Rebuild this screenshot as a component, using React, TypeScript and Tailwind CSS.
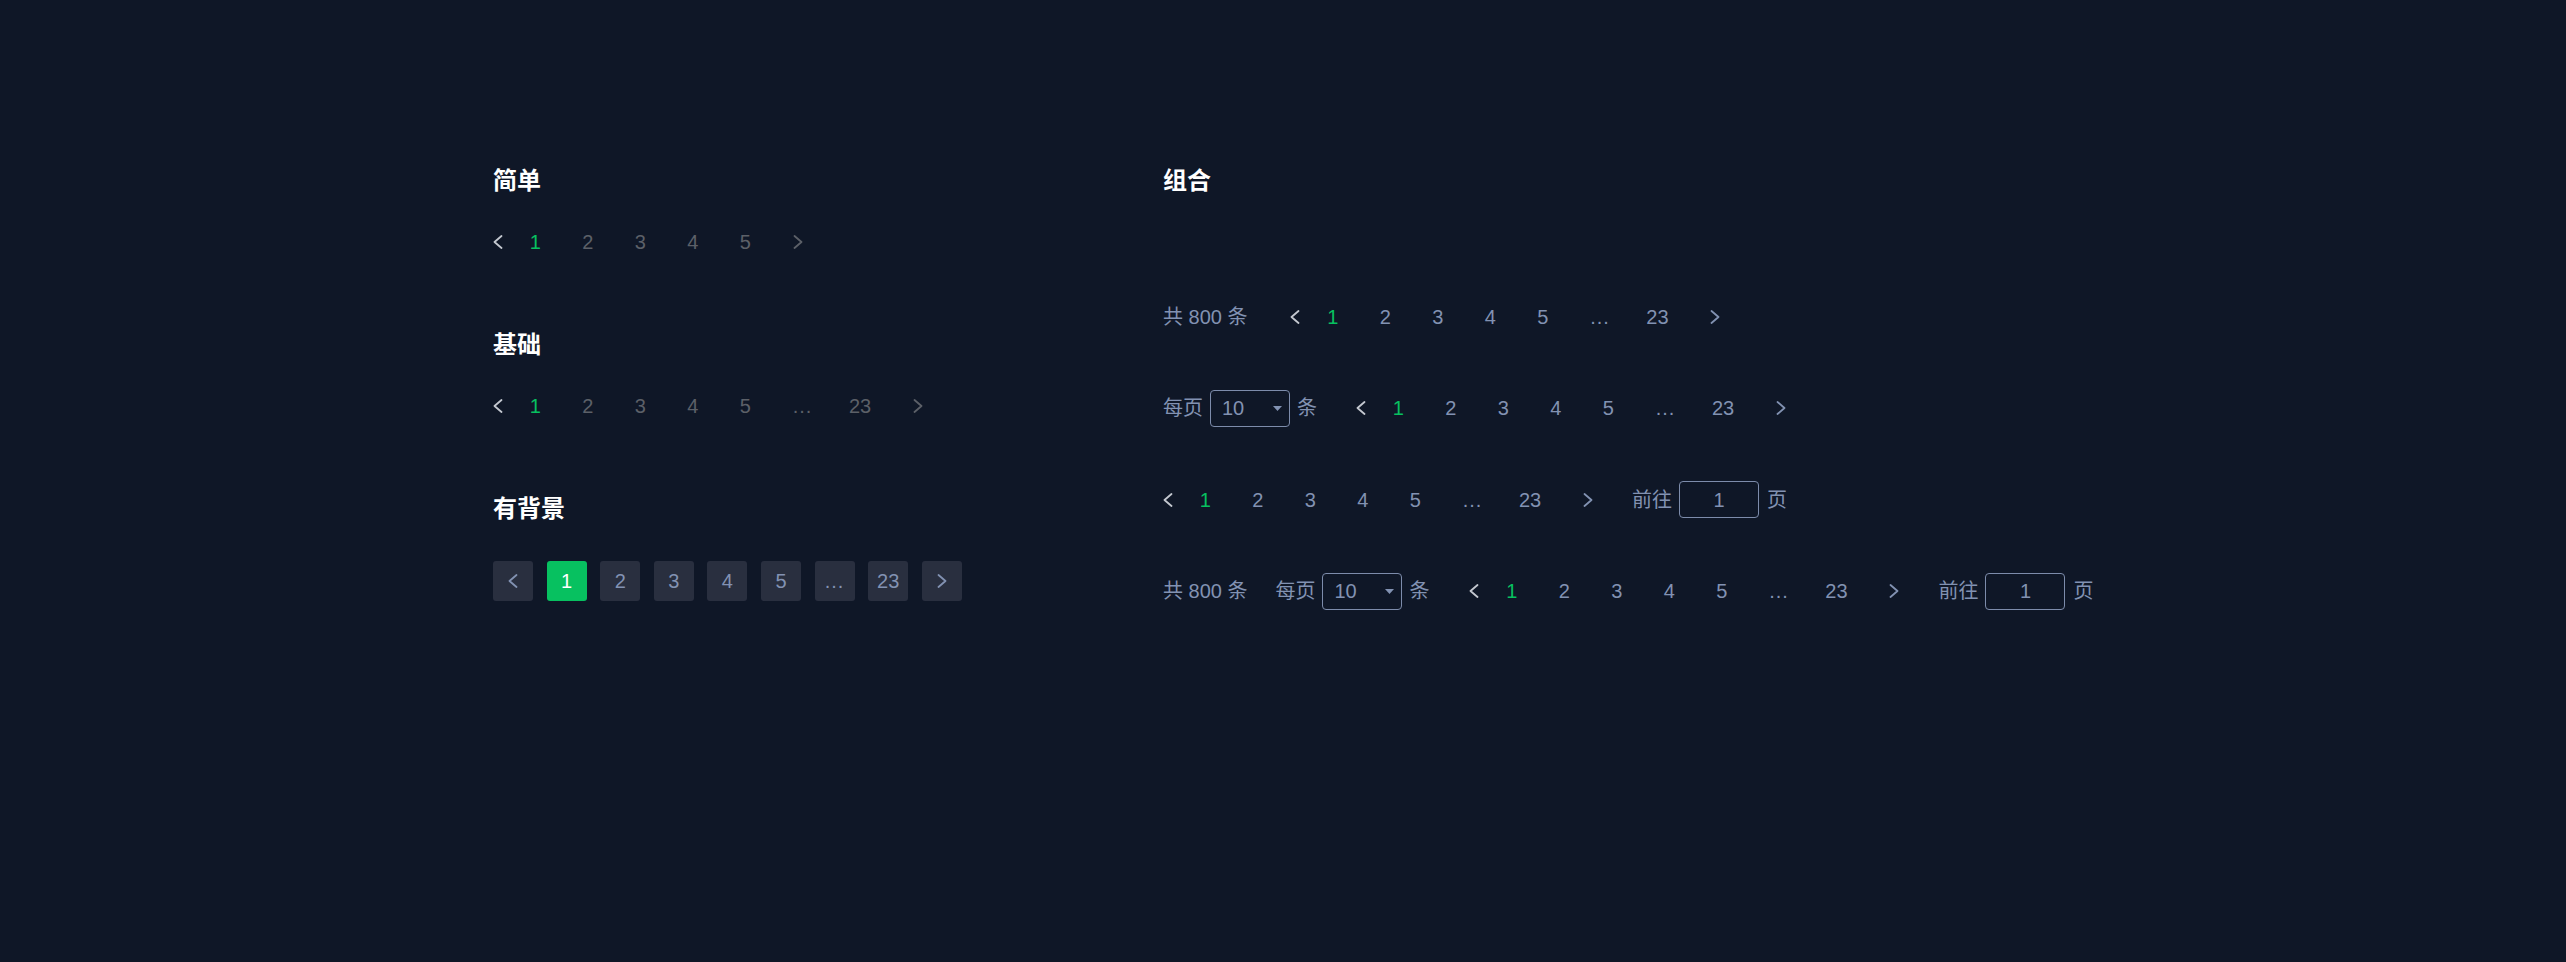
import type { ReactNode } from 'react';

const GREEN = 'text-[#07c160]';

function Chevron({ dir }: { dir: 'left' | 'right' }) {
  return (
    <svg
      width="10"
      height="14"
      viewBox="0 0 10 14"
      fill="none"
      stroke="currentColor"
      strokeWidth="1.8"
      strokeLinecap="round"
      strokeLinejoin="round"
    >
      <polyline points={dir === 'left' ? '8.5,1 1.5,7 8.5,13' : '1.5,1 8.5,7 1.5,13'} />
    </svg>
  );
}

const itemWidth: Record<string, string> = {
  '...': 'w-[62px] tracking-[1px]',
  '23': 'w-[53px]',
};

function PlainPager({ pages, tone, className = '' }: { pages: string[]; tone: 'gray' | 'blue'; className?: string }) {
  const txt = tone === 'gray' ? 'text-[#5c6068]' : 'text-[#8292b2]';
  const long = pages.length > 5;
  return (
    <div className={`flex h-9 items-center ${className}`}>
      <button className="flex h-9 items-center pr-[6px] text-[#c4c8d0]">
        <Chevron dir="left" />
      </button>
      {pages.map((p) => (
        <span key={p} className={`${itemWidth[p] ?? 'w-[52.5px]'} text-center leading-9 ${p === '1' ? GREEN : txt}`}>
          {p}
        </span>
      ))}
      <button className={`flex h-9 items-center ${long ? 'pl-[26.5px]' : 'pl-[21.5px]'} ${txt}`}>
        <Chevron dir="right" />
      </button>
    </div>
  );
}

function BoxPager() {
  const pages = ['1', '2', '3', '4', '5', '...', '23'];
  return (
    <div className="flex items-center gap-[13.6px]">
      <button className="flex h-10 w-10 items-center justify-center rounded-[3px] bg-[#292f3f] text-[#8292b2]">
        <Chevron dir="left" />
      </button>
      {pages.map((p) => (
        <span
          key={p}
          className={`flex h-10 w-10 items-center justify-center rounded-[3px] ${
            p === '1' ? 'bg-[#07c160] text-white' : 'bg-[#292f3f] text-[#8292b2]'
          } ${p === '...' ? 'tracking-[1px]' : ''}`}
        >
          {p}
        </span>
      ))}
      <button className="flex h-10 w-10 items-center justify-center rounded-[3px] bg-[#292f3f] text-[#8292b2]">
        <Chevron dir="right" />
      </button>
    </div>
  );
}

function SizeSelect() {
  return (
    <div className="ml-[7px] flex h-[37px] w-20 items-center justify-between rounded-[4px] border border-[#7d8cab] pl-[11px] pr-[7px]">
      <span>10</span>
      <svg width="9" height="5" viewBox="0 0 9 5">
        <polygon points="0,0 9,0 4.5,5" fill="currentColor" />
      </svg>
    </div>
  );
}

function Jumper({ className = '' }: { className?: string }) {
  return (
    <div className={`flex items-center ${className}`}>
      <span>前往</span>
      <div className="ml-[7px] flex h-[37px] w-20 items-center justify-center rounded-[4px] border border-[#7d8cab]">1</div>
      <span className="ml-2">页</span>
    </div>
  );
}

function Heading({ children }: { children: ReactNode }) {
  return <h2 className="text-[24px] font-bold leading-9 text-white">{children}</h2>;
}

const full = ['1', '2', '3', '4', '5', '...', '23'];

export default function App() {
  return (
    <div className="min-h-screen w-full bg-[#0f1727] font-['Liberation_Sans','Noto_Sans_CJK_SC',sans-serif] text-[20px]">
      <div className="flex pl-[493px] pt-[163px]">
        <div className="flex w-[670px] flex-col">
          <Heading>简单</Heading>
          <PlainPager pages={['1', '2', '3', '4', '5']} tone="gray" className="mt-[25px]" />

          <div className="mt-[67px]">
            <Heading>基础</Heading>
          </div>
          <PlainPager pages={full} tone="gray" className="mt-[25px]" />

          <div className="mt-[67px]">
            <Heading>有背景</Heading>
          </div>
          <div className="mt-[34px]">
            <BoxPager />
          </div>
        </div>

        <div className="flex flex-col text-[#8292b2]">
          <Heading>组合</Heading>
          <div className="mt-[99px] flex flex-col gap-[54.5px]">
            <div className="flex h-[37px] items-center">
              <span>共 800 条</span>
              <PlainPager pages={full} tone="blue" className="ml-[43px]" />
            </div>

            <div className="flex h-[37px] items-center">
              <span>每页</span>
              <SizeSelect />
              <span className="ml-[7px]">条</span>
              <PlainPager pages={full} tone="blue" className="ml-[39px]" />
            </div>

            <div className="flex h-[37px] items-center">
              <PlainPager pages={full} tone="blue" />
              <Jumper className="ml-[39px]" />
            </div>

            <div className="flex h-[37px] items-center">
              <span>共 800 条</span>
              <span className="ml-[28px]">每页</span>
              <SizeSelect />
              <span className="ml-[7px]">条</span>
              <PlainPager pages={full} tone="blue" className="ml-[40px]" />
              <Jumper className="ml-[39px]" />
            </div>
          </div>
        </div>
      </div>
    </div>
  );
}
